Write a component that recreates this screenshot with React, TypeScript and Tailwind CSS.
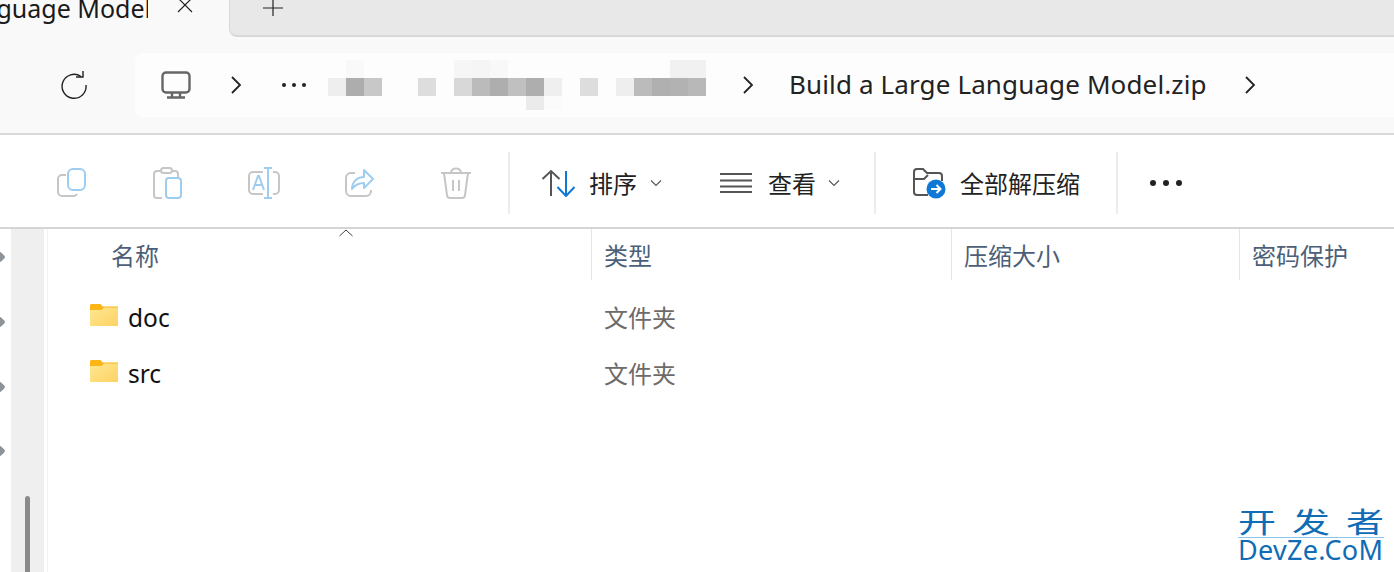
const mosaic: [number, number, string][] = [
  [328, 78, '#eeeeee'], [346, 78, '#adadad'], [364, 78, '#c8c8c8'], [418, 78, '#dddddd'],
  [454, 78, '#d8d8d8'], [472, 78, '#bbbbbb'], [490, 78, '#aeaeae'], [508, 78, '#c0c0c0'],
  [526, 78, '#aeaeae'], [544, 78, '#efefef'], [580, 78, '#dddddd'], [616, 78, '#eeeeee'],
  [634, 78, '#bbbbbb'], [652, 78, '#b0b0b0'], [670, 78, '#b2b2b2'], [688, 78, '#b8b8b8'],
  [346, 60, '#f9f9f9'], [454, 60, '#f6f6f6'], [472, 60, '#f5f5f5'],
  [490, 60, '#f8f8f8'], [670, 60, '#f1f1f1'], [688, 60, '#f1f1f1'],
  [526, 96, '#ebebeb'], [544, 96, '#fbfbfb'],
]

function Chevron() {
  return (
    <svg width="12" height="18" viewBox="0 0 12 18" fill="none" stroke="#222" strokeWidth="1.8">
      <path d="M2 1l8 8-8 8" />
    </svg>
  )
}

function SmallChevron() {
  return (
    <svg width="12" height="8" viewBox="0 0 12 8" fill="none" stroke="#555" strokeWidth="1.1">
      <path d="M1 1.5l5 5 5-5" />
    </svg>
  )
}

function Dots({ r = 2, w = 24 }: { r?: number; w?: number }) {
  const step = w / 2 - r
  return (
    <svg width={w} height={r * 2} viewBox={`0 0 ${w} ${r * 2}`} fill="#222">
      <circle cx={r} cy={r} r={r} />
      <circle cx={r + step} cy={r} r={r} />
      <circle cx={r + step * 2} cy={r} r={r} />
    </svg>
  )
}

function Folder({ id }: { id: string }) {
  return (
    <svg className="-mt-1" width="28" height="22" viewBox="0 0 28 22">
      <defs>
        <linearGradient id={id} x1="0" y1="0" x2="1" y2="1">
          <stop offset="0" stopColor="#ffe792" />
          <stop offset="1" stopColor="#fcd264" />
        </linearGradient>
      </defs>
      <path d="M0 1.5A1.5 1.5 0 0 1 1.5 0h9l2 2.5H28V8H0z" fill="#fbb514" />
      <path d="M0 6h11.5l2.5-2.5h14V21a1 1 0 0 1-1 1H1a1 1 0 0 1-1-1z" fill={`url(#${id})`} />
    </svg>
  )
}

function HeaderCell({ label, className }: { label: string; className: string }) {
  return (
    <div className={`flex h-[51px] items-center border-r border-[#e5e5e5] pt-[2px] text-[24px] text-[#4d5f78] ${className}`}>
      {label}
    </div>
  )
}

function FileRow({ name }: { name: string }) {
  return (
    <div className="flex h-14 items-center">
      <div className="flex w-[543px] items-center pl-[42px]">
        <Folder id={`folder-${name}`} />
        <span className="ml-[10px] pt-[2px] text-[24.5px] text-[#111]">{name}</span>
      </div>
      <span className="pl-[13px] pt-[2px] text-[24px] text-[#6e6a68]">文件夹</span>
    </div>
  )
}

export default function App() {
  return (
    <div className="flex h-[572px] w-[1394px] flex-col overflow-hidden bg-white font-['Noto_Sans','Noto_Sans_CJK_SC',sans-serif]">
      {/* Tab strip */}
      <div className="flex h-[37px] bg-[#f9f9f9]">
        <div className="flex w-[229px] shrink-0 items-start">
          <div className="-mt-[9px] flex w-[148px] shrink-0 justify-end overflow-hidden">
            <span className="-mr-[3px] whitespace-nowrap text-[25px] leading-[34px] text-[#1a1a1a]">Large Language Model</span>
          </div>
          <svg className="ml-[29px]" width="16" height="13" viewBox="0 0 16 13" fill="none" stroke="#222" strokeWidth="1.2">
            <path d="M1-2l14 14M15-2L1 12" />
          </svg>
        </div>
        <div className="flex flex-1 rounded-bl-lg border-b-2 border-l border-[#d8d8d8] bg-[#e8e8e8]">
          <svg className="ml-8" width="22" height="17" viewBox="0 0 22 17" fill="none" stroke="#222" strokeWidth="1.2">
            <path d="M11-4v20M1 8h20" />
          </svg>
        </div>
      </div>

      {/* Address row */}
      <div className="flex h-[98px] items-center border-b-2 border-[#d9d9d9] bg-[#f9f9f9]">
        <div className="flex w-[135px] shrink-0 justify-center pl-3">
          <svg width="28" height="28" viewBox="0 0 28 28" fill="none" stroke="#222" strokeWidth="1.4">
            <path d="M21 5.5A12 12 0 1 0 26 14" />
            <path d="M15 6h7V0" transform="translate(1 0)" />
          </svg>
        </div>
        <div className="relative flex h-16 flex-1 items-center rounded-l-lg bg-[#fdfdfd] pl-[26px]">
          <svg width="30" height="28" viewBox="0 0 30 28" fill="none" stroke="#666" strokeWidth="2.4">
            <rect x="1.5" y="1.5" width="27" height="20" rx="3.5" />
            <path d="M11 22v4M19 22v4M6 26.5h18" />
          </svg>
          <div className="ml-[39px]"><Chevron /></div>
          <div className="ml-[40px]"><Dots r={2} w={24} /></div>
          <svg className="absolute left-0 top-0" width="600" height="64" viewBox="135 53 600 64">
            {mosaic.map(([x, y, fill]) => (
              <rect key={`${x}-${y}`} x={x} y={y} width="18" height={y === 96 ? 14 : 18} fill={fill} />
            ))}
          </svg>
          <div className="ml-[436px]"><Chevron /></div>
          <span className="ml-[35px] whitespace-nowrap pb-[2px] text-[26px] tracking-[0.13px] text-[#222]">Build a Large Language Model.zip</span>
          <div className="ml-[37px]"><Chevron /></div>
        </div>
      </div>

      {/* Toolbar */}
      <div className="flex h-[94px] shrink-0 items-center border-b-2 border-[#d5d5d5] pl-6 pt-1">
        <div className="flex w-24 justify-center">
          <svg width="30" height="30" viewBox="0 0 30 30" fill="none" strokeWidth="2">
            <path d="M9 7H5a4 4 0 0 0-4 4v13a4 4 0 0 0 4 4h12a4 4 0 0 0 3-2" stroke="#c6c6c6" />
            <rect x="11" y="1" width="17" height="21" rx="5" stroke="#9fcdf0" />
          </svg>
        </div>
        <div className="flex w-24 justify-center">
          <svg width="30" height="32" viewBox="0 0 30 32" fill="none" strokeWidth="2">
            <path d="M8 4H4a3 3 0 0 0-3 3v21a3 3 0 0 0 3 3h5M20 4h2a3 3 0 0 1 3 3v3" stroke="#c6c6c6" />
            <rect x="8" y="1" width="11" height="5" rx="2.5" stroke="#c6c6c6" />
            <rect x="13" y="11" width="15" height="20" rx="3" stroke="#9fcdf0" />
          </svg>
        </div>
        <div className="flex w-24 justify-center">
          <svg width="34" height="32" viewBox="0 0 34 32" fill="none" strokeWidth="2">
            <path d="M16 5H6a4 4 0 0 0-4 4v14a4 4 0 0 0 4 4h10M26 5h2a4 4 0 0 1 4 4v14a4 4 0 0 1-4 4h-2" stroke="#c6c6c6" />
            <path d="M17 1h8M21 1v30M17 31h8M6 23l5-14h1l5 14M8 18h7" stroke="#9fcdf0" />
          </svg>
        </div>
        <div className="flex w-24 justify-center">
          <svg width="30" height="30" viewBox="0 0 30 30" fill="none" strokeWidth="2">
            <path d="M10 5H6a5 5 0 0 0-5 5v13a5 5 0 0 0 5 5h15a5 5 0 0 0 5-5v-1" stroke="#c6c6c6" />
            <path d="M19 2l9 9-9 9v-5c-5 0-9 2-12 6 0-7 5-12 12-12z" stroke="#9fcdf0" strokeLinejoin="round" />
          </svg>
        </div>
        <div className="flex w-24 justify-center">
          <svg width="30" height="32" viewBox="0 0 30 32" fill="none" stroke="#c6c6c6" strokeWidth="2">
            <path d="M0 6h30M3 6l3 22a3 3 0 0 0 3 3h12a3 3 0 0 0 3-3l3-22M10 6c0-6 10-6 10 0M12 13v11M18 13v11" />
          </svg>
        </div>
        <div className="ml-1 h-[62px] w-[2px] bg-[#ececec]" />

        <svg className="ml-[31px]" width="35" height="28" viewBox="0 0 35 28" fill="none" strokeWidth="2">
          <path d="M1.5 10L10 2l8.500 8M10 2v25" stroke="#555" />
          <path d="M16.500 18l8.500 9 8.500-9M25 27V2" stroke="#0f78d4" />
        </svg>
        <span className="ml-[13px] pt-[2px] text-[24px] text-[#222]">排序</span>
        <div className="ml-[13px]"><SmallChevron /></div>

        <svg className="ml-[58px]" width="32" height="20" viewBox="0 0 32 20" fill="none" stroke="#555" strokeWidth="2">
          <path d="M0 1h32M0 7.5h32M0 13.5h32M0 19h32" />
        </svg>
        <span className="ml-4 pt-[2px] text-[24px] text-[#222]">查看</span>
        <div className="ml-3"><SmallChevron /></div>
        <div className="ml-[34px] h-[62px] w-[2px] bg-[#ececec]" />

        <svg className="ml-9" width="34" height="32" viewBox="0 0 34 32" fill="none">
          <path d="M16 28H5a3 3 0 0 1-3-3V5a3 3 0 0 1 3-3h6l4 4h12a3 3 0 0 1 3 3v5M2 12h10l4-4" stroke="#555" strokeWidth="2" />
          <circle cx="24" cy="22" r="9.5" fill="#0f78d4" />
          <path d="M19 22h9M24.5 18l4 4-4 4" stroke="#fff" strokeWidth="2" />
        </svg>
        <span className="ml-[14px] pt-[2px] text-[24px] text-[#222]">全部解压缩</span>
        <div className="ml-9 h-[62px] w-[2px] bg-[#ececec]" />
        <div className="ml-[32px]"><Dots r={3} w={32} /></div>
      </div>

      {/* Body */}
      <div className="flex min-h-0 flex-1">
        <div className="relative flex w-12 shrink-0 border-r border-[#f3f3f3] pl-[11px] pr-[3px]">
          <div className="flex flex-1 items-end justify-center bg-[#efefef]">
            <div className="h-[76px] w-[5px] rounded-t-sm bg-[#8a8a8a]" />
          </div>
          {[24, 89, 154, 218].map((top) => (
            <div key={top} className="absolute -left-[4px] h-2 w-2 rotate-45 rounded-[2px] bg-[#8d9499]" style={{ top }} />
          ))}
        </div>

        <div className="flex min-w-0 flex-1 flex-col">
          <div className="flex">
            <HeaderCell label="名称" className="w-[544px] pl-[63px]" />
            <HeaderCell label="类型" className="w-[360px] pl-3" />
            <HeaderCell label="压缩大小" className="w-[288px] pl-3" />
            <div className="flex h-[51px] flex-1 items-center whitespace-nowrap pl-3 pt-[2px] text-[24px] text-[#4d5f78]">密码保护</div>
          </div>
          <div className="mt-[9px]">
            <FileRow name="doc" />
            <FileRow name="src" />
          </div>
        </div>
      </div>

      {/* Sort caret sits over the header line */}
      <svg className="absolute left-[339px] top-[229px]" width="14" height="8" viewBox="0 0 14 8" fill="none" stroke="#444" strokeWidth="1">
        <path d="M0.5 7L7 1l6.5 6" />
      </svg>

      {/* Watermark */}
      <div className="absolute left-[1238px] top-[500px] flex w-[146px] flex-col text-[#0f6cb5]">
        <div className="flex h-[38px] items-center justify-between border-b border-[#8cc4ec] pt-[6px] text-[38px] leading-[30px]">
          <span className="block scale-y-75">开</span>
          <span className="block scale-y-75">发</span>
          <span className="block scale-y-75">者</span>
        </div>
        <span className="-mt-[2px] whitespace-nowrap text-[27px] leading-[27px] tracking-[0.3px]">DevZe.CoM</span>
      </div>
    </div>
  )
}
